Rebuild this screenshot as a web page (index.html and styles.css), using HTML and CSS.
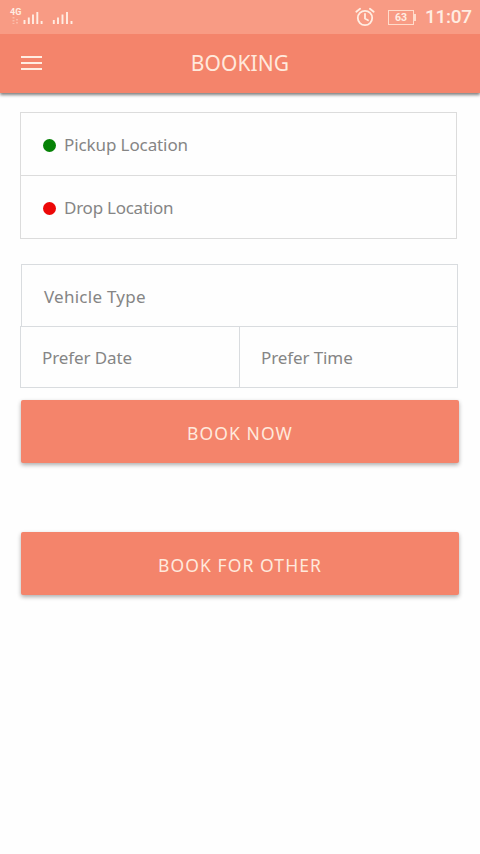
FILE: index.html
```html
<!DOCTYPE html>
<html lang="en">
<head>
<meta charset="utf-8">
<title>Booking</title>
<link rel="stylesheet" href="styles.css">
</head>
<body>
<div class="status">
  <div class="network">
    <span class="generation">4G</span>
    <svg width="66" height="16" viewBox="0 0 66 16" fill="none" stroke="#ffede2" stroke-width="1.9">
      <path d="M3.5 8v7M7 10v5" stroke-opacity=".4" stroke-dasharray="1.5 1.5"/>
      <path d="M14.5 11v4M18.800 8.500v6.500M23 5.500v9.500M27.300 3v12M31.600 12v3"/>
      <path d="M43.800 11v4M48 8.500v6.500M52.500 5.500v9.500M57 3v12M61.500 12v3"/>
    </svg>
  </div>
  <div class="system">
    <svg class="alarm" width="20" height="20" viewBox="0 0 20 20" fill="none" stroke="#ffede2" stroke-width="1.8" stroke-linecap="round">
      <circle cx="10" cy="11" r="7.200"/>
      <path d="M1.300 4.800l3.800-3.100M18.700 4.800l-3.800-3.100M10 7v4.500l3 1.700"/>
    </svg>
    <span class="battery">63</span>
    <span class="clock">11:07</span>
  </div>
</div>
<header class="bar">
  <svg class="menu" width="21" height="16" viewBox="0 0 21 16" stroke="#ffede2" stroke-width="2.100"><path d="M0 2h21M0 8h21M0 14h21"/></svg>
  <h1 class="title">BOOKING</h1>
</header>
<main class="content">
  <section class="locations">
    <div class="place"><i class="dot pickup"></i><span class="pickup-label">Pickup Location</span></div>
    <div class="place"><i class="dot drop"></i><span class="drop-label">Drop Location</span></div>
  </section>
  <section class="details">
    <div class="vehicle">Vehicle Type</div>
    <div class="schedule">
      <div class="slot date">Prefer Date</div>
      <div class="slot time">Prefer Time</div>
    </div>
  </section>
  <button class="action now">BOOK NOW</button>
  <button class="action other">BOOK FOR OTHER</button>
</main>
</body>
</html>
```
FILE: styles.css
```css
* { box-sizing: border-box; }
body {
  margin: 0;
  min-height: 854px;
  background: #fefefe;
  color: #858585;
  font: 17px/24px "Noto Sans", sans-serif;
}
.status {
  height: 34px;
  padding: 0 8px 0 10px;
  display: flex;
  justify-content: space-between;
  background: #f89b84;
  color: #ffede2;
}
.network { position: relative; padding-top: 9px; }
.network svg { display: block; }
.generation {
  position: absolute;
  left: 0;
  top: 7px;
  font: bold 9px/11px Roboto, sans-serif;
}
.system { display: flex; align-items: center; }
.alarm { margin-right: 13px; }
.battery {
  position: relative;
  width: 26px;
  height: 15px;
  margin-right: 11px;
  border: 1.5px solid #ffdccb;
  font: bold 10.500px/13px Roboto, sans-serif;
  text-align: center;
}
.battery::after {
  content: "";
  position: absolute;
  left: 25px;
  top: 3px;
  width: 2px;
  height: 7px;
  background: #ffdccb;
}
.clock {
  width: 47px;
  font: 500 19px/34px Roboto, sans-serif;
  letter-spacing: -.3px;
  white-space: nowrap;
}
.bar {
  height: 59px;
  padding-bottom: 1px;
  display: grid;
  grid-template-columns: 1fr auto 1fr;
  align-items: center;
  background: #f4846b;
  box-shadow: 0 2px 3px rgba(0, 0, 0, .5);
  clip-path: inset(0 0 -8px 0);
}
.menu { margin-left: 21px; }
.title {
  margin: 0;
  color: #ffe9dc;
  font: 400 21px/30px "Noto Sans", sans-serif;
  letter-spacing: .1px;
}
.content { padding: 19px 21px 0 20px; }
.locations {
  width: 437px;
  height: 127px;
  border: 1px solid #dcdcdc;
}
.place {
  height: 62px;
  padding: 2px 0 0 22px;
  display: flex;
  align-items: center;
}
.place + .place {
  height: 63px;
  border-top: 1px solid #dcdcdc;
}
.pickup-label { letter-spacing: -.1px; }
.drop-label { letter-spacing: -.25px; }
.dot { width: 13px; height: 13px; margin-right: 8px; border-radius: 50%; }
.pickup { background: #068206; }
.drop { background: #ec0808; }
.details { width: 438px; margin-top: 25px; }
.vehicle {
  height: 62px;
  margin-left: 1px;
  padding: 2px 0 0 22px;
  display: flex;
  align-items: center;
  border: 1px solid #d9dcdf;
  border-bottom: 0;
  letter-spacing: .25px;
}
.schedule {
  height: 62px;
  display: grid;
  grid-template-columns: 219px 1fr;
  border: 1px solid #d9dcdf;
}
.slot {
  padding: 2px 0 0 21px;
  display: flex;
  align-items: center;
  letter-spacing: -.1px;
}
.date { border-right: 1px solid #d9dcdf; }
.action {
  display: block;
  width: 438px;
  height: 63px;
  margin: 12px 0 0 1px;
  padding: 2px 0 0;
  border: 0;
  border-radius: 2px;
  background: #f4846b;
  color: #ffe9dc;
  box-shadow: 0 2px 4px rgba(0, 0, 0, .32);
  font: 17.500px/24px "Noto Sans", sans-serif;
  letter-spacing: 1.100px;
}
.other { margin-top: 69px; }
```
